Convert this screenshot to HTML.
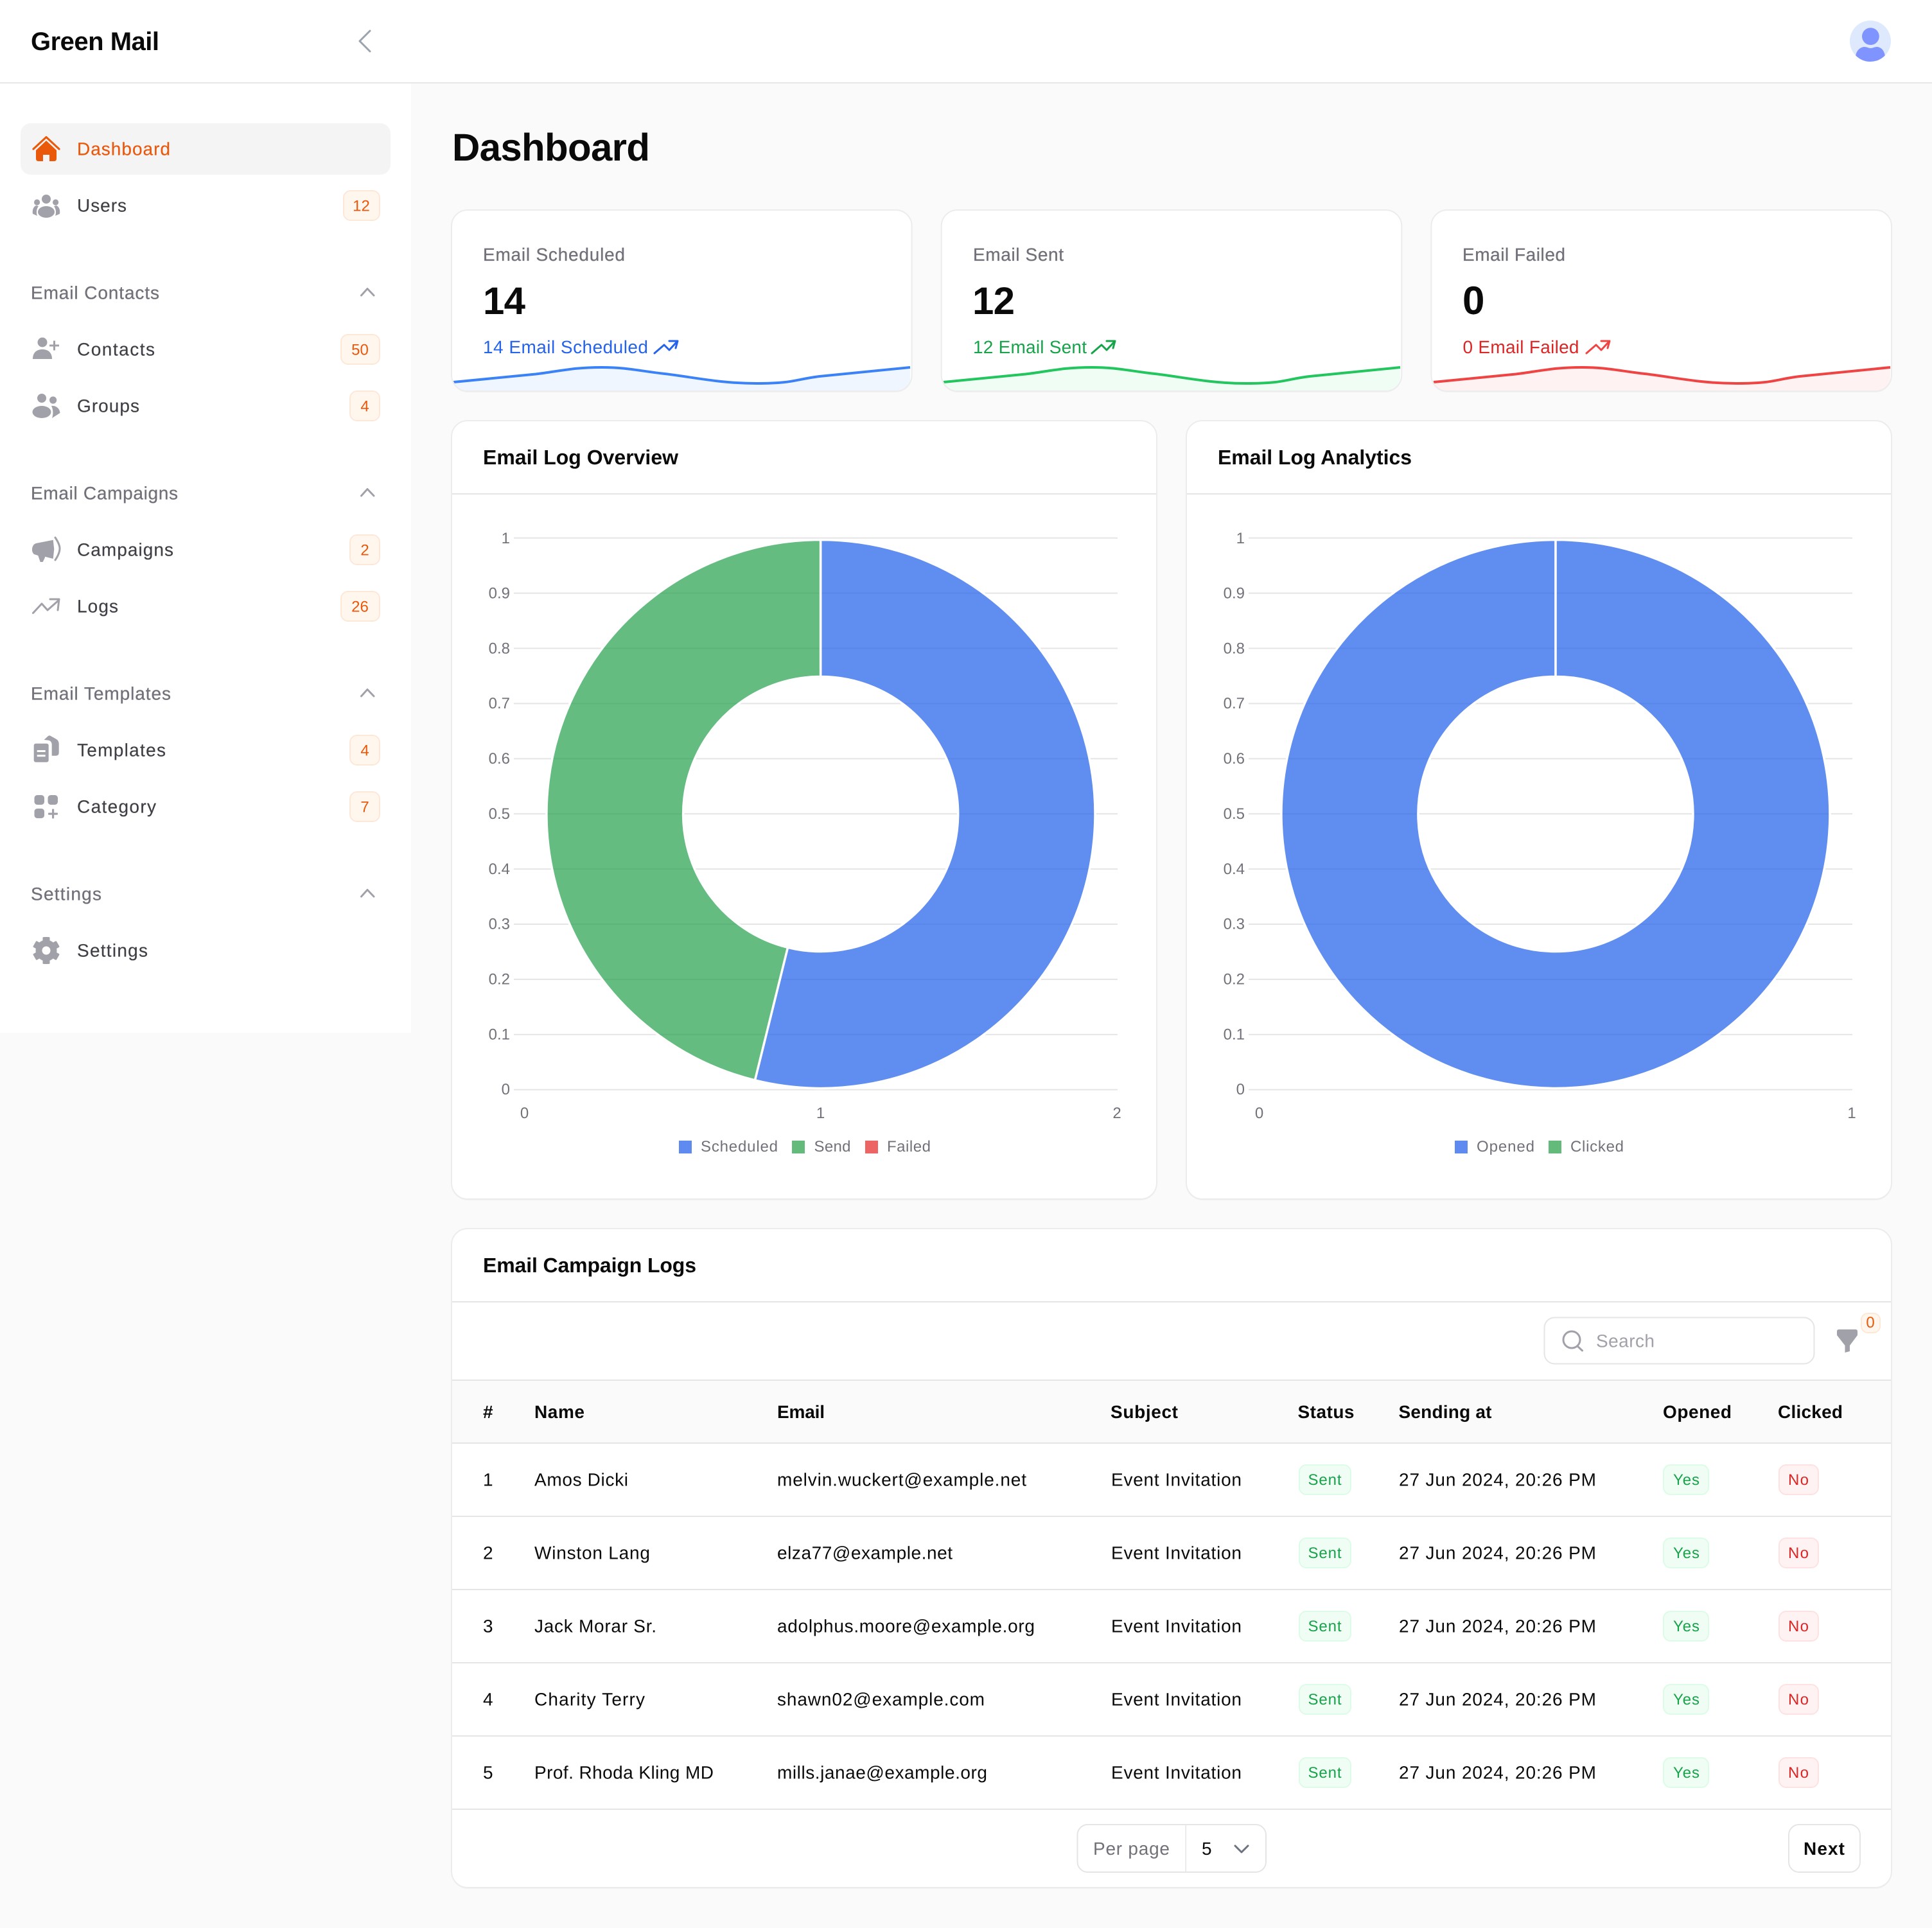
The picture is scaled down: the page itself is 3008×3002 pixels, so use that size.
<!DOCTYPE html>
<html lang="en"><head><meta charset="utf-8"><title>Green Mail Dashboard</title>
<style>
html,body{margin:0;padding:0;background:#fafafa}
svg{display:block}
text{font-family:"Liberation Sans",Arial,sans-serif;font-size:28px;fill:#0a0a0a;text-rendering:geometricPrecision}
.b{font-weight:700}
.g{fill:#71717a}
.nav{fill:#3f3f46;stroke:#3f3f46;stroke-width:.2px}
.h{fill:#71717a;stroke:#71717a;stroke-width:.3px}
.ax{font-size:24px;fill:#71717a}
.bt{font-size:24px;fill:#ea580c;text-anchor:middle}
.bd{fill:#fff7ed;stroke:#fde8d8;stroke-width:2}
.card{fill:#fff;stroke:#ececec;stroke-width:2}
.sh{fill:#000;opacity:.035}
.ln{fill:#e5e5e5}
.i{fill:#a1a1aa}
.s{fill:none;stroke:#a1a1aa;stroke-width:3;stroke-linecap:round;stroke-linejoin:round}
.ok{fill:#f0fdf4;stroke:#dcfce7;stroke-width:2}
.no{fill:#fef2f2;stroke:#fee2e2;stroke-width:2}
.okt{font-size:24px;fill:#16a34a}
.not{font-size:24px;fill:#dc2626}
.sl{fill:rgba(37,99,235,.73);stroke:#fff;stroke-width:3.5}
.sg{fill:rgba(34,160,74,.7);stroke:#fff;stroke-width:3.5}
</style></head><body>
<svg xmlns="http://www.w3.org/2000/svg" width="3008" height="3002" viewBox="0 0 3008 3002">
<defs>
<path id="sp" d="M0 595L128 582.5C165 578 185 572 231 572C270 572 285 577 329 582C375 587.5 415 597 472 597C530 597 530 591 570 586L711 572"/>
<path id="sa" d="M0 595L128 582.5C165 578 185 572 231 572C270 572 285 577 329 582C375 587.5 415 597 472 597C530 597 530 591 570 586L711 572V612H0Z"/>
<clipPath id="c1"><rect x="704" y="328" width="714.67" height="280" rx="24"/></clipPath>
<clipPath id="c2"><rect x="1466.67" y="328" width="714.67" height="280" rx="24"/></clipPath>
<clipPath id="c3"><rect x="2229.33" y="328" width="714.67" height="280" rx="24"/></clipPath>
<clipPath id="av"><circle cx="2912" cy="64" r="32"/></clipPath>
<g id="tr" fill="none" stroke-width="3" stroke-linecap="round" stroke-linejoin="round"><path d="M0 20L15 7L23 15L35 2"/><path d="M23 1H36L33 12"/></g>
</defs>
<rect width="3008" height="3002" fill="#fafafa"/>
<!-- header and sidebar -->
<rect x="0" y="0" width="3008" height="128" fill="#fff"/>
<rect x="0" y="128" width="3008" height="2" fill="#e7e7e7"/>
<rect x="0" y="130" width="640" height="1478" fill="#fff"/>
<text x="48" y="78" class="b" style="font-size:40px" textLength="200">Green Mail</text>
<path d="M576 48L560 64L576 80" fill="none" stroke="#9ca3af" stroke-width="3" stroke-linecap="round" stroke-linejoin="round"/>
<circle cx="2912" cy="64" r="32" fill="#dfe9fd"/>
<g clip-path="url(#av)"><circle cx="2912.4" cy="56.6" r="13.4" fill="#8094ff"/>
<path d="M2889 88C2890 78 2897 73 2903 73C2907 73 2909 75 2912.4 75C2916 75 2918 73 2922 73C2928 73 2934 78 2935 88C2929 93 2921 97 2912 97C2903 97 2895 93 2889 88Z" fill="#8094ff"/></g>
<!-- nav -->
<rect x="32" y="192" width="576" height="80" rx="16" fill="#f4f4f5"/>
<path d="M52 232L72 213.5L92 232" fill="none" stroke="#ea580c" stroke-width="3.2" stroke-linejoin="round" stroke-linecap="round"/>
<path d="M72 219L88 234V247Q88 251 84 251H77V241H67V251H60Q56 251 56 247V234Z" fill="#ea580c"/>
<text x="120" y="241.5" style="fill:#ea580c;stroke:#ea580c;stroke-width:.2px" textLength="145">Dashboard</text>
<g class="i"><circle cx="72" cy="310" r="7"/><circle cx="57.6" cy="315" r="4.6"/><circle cx="86.6" cy="315" r="4.6"/><ellipse cx="72" cy="330" rx="13" ry="9"/><path d="M56 320C52 322 50 327 51 333L58 336C56 331 57 325 60 321ZM88 320C92 322 94 327 93 333L86 336C88 331 87 325 84 321Z"/></g>
<text x="120" y="329.5" class="nav" textLength="77">Users</text>
<rect x="535" y="297" width="56" height="46" rx="11" class="bd"/><text x="562.5" y="328.5" class="bt">12</text>
<text x="48" y="465.5" class="h" textLength="200">Email Contacts</text>
<path class="s" d="M562.5 460L572 449.5L582 460"/>
<g class="i"><circle cx="66" cy="533" r="7.5"/><path d="M51 559C51 549 57 544 66 544C75 544 81 549 81 559Z"/><rect x="77" y="536.5" width="15" height="3"/><rect x="83" y="530.5" width="3" height="15"/></g>
<text x="120" y="553.5" class="nav" textLength="121">Contacts</text>
<rect x="531" y="521" width="60" height="46" rx="11" class="bd"/><text x="560.5" y="552.5" class="bt">50</text>
<g class="i"><circle cx="65" cy="620" r="7"/><circle cx="82.6" cy="623" r="5.6"/><ellipse cx="65" cy="641.5" rx="14.5" ry="9.5"/><path d="M80 632C87 631 93 636 93.5 643L81 651C83 645 83 638 80 632Z"/></g>
<text x="120" y="641.5" class="nav" textLength="97">Groups</text>
<rect x="545" y="609" width="46" height="46" rx="11" class="bd"/><text x="568" y="640.5" class="bt">4</text>
<text x="48" y="777.5" class="h" textLength="229">Email Campaigns</text>
<path class="s" d="M562.5 772L572 761.5L582 772"/>
<path class="i" d="M50 856C50 850 53 847 56 846L82.7 840.7L84.3 855L82.7 870L70 866.7V868L66.7 875H62.7L59.3 865L53 863C51 861 50 859 50 856Z"/>
<path d="M86 837C90 843 93 849 93 854C93 860 90 866 86 872" fill="none" stroke="#a1a1aa" stroke-width="3" stroke-linecap="round"/>
<text x="120" y="865.5" class="nav" textLength="150">Campaigns</text>
<rect x="545" y="833" width="46" height="46" rx="11" class="bd"/><text x="568" y="864.5" class="bt">2</text>
<path class="s" d="M51.5 954.5L65 940L74 950L91.5 934.5M78 933H92L90 950"/>
<text x="120" y="953.5" class="nav" textLength="64">Logs</text>
<rect x="531" y="921" width="60" height="46" rx="11" class="bd"/><text x="560.5" y="952.5" class="bt">26</text>
<text x="48" y="1089.5" class="h" textLength="218">Email Templates</text>
<path class="s" d="M562.5 1084L572 1073.5L582 1084"/>
<g class="i"><path d="M68.5 1152L75 1146Q77 1144.5 79 1146L87 1150.5Q91.7 1153 91.7 1158V1172Q91.7 1176.7 87 1176.7H80.7V1160Q80.7 1153 74 1152.5Z"/><rect x="52.7" y="1157.7" width="23" height="29" rx="3"/></g>
<rect x="57.7" y="1168" width="13" height="3" fill="#fff"/><rect x="57.7" y="1175.2" width="13" height="3" fill="#fff"/>
<text x="120" y="1177.5" class="nav" textLength="138">Templates</text>
<rect x="545" y="1145" width="46" height="46" rx="11" class="bd"/><text x="568" y="1176.5" class="bt">4</text>
<g class="i"><rect x="53.5" y="1238" width="15.5" height="15" rx="4.5"/><rect x="74.5" y="1238" width="15.5" height="15" rx="4.5"/><rect x="53.5" y="1259" width="15.5" height="15" rx="4.5"/><rect x="75" y="1265.5" width="15" height="3.2" rx="1"/><rect x="81" y="1259.5" width="3.2" height="15" rx="1"/></g>
<text x="120" y="1265.5" class="nav" textLength="123">Category</text>
<rect x="545" y="1233" width="46" height="46" rx="11" class="bd"/><text x="568" y="1264.5" class="bt">7</text>
<text x="48" y="1401.5" class="h" textLength="110">Settings</text>
<path class="s" d="M562.5 1396L572 1385.5L582 1396"/>
<g class="i"><circle cx="72" cy="1480" r="16.5"/>
<g transform="translate(72 1480)"><rect x="-5.5" y="-21" width="11" height="8" rx="1.5"/><rect x="-5.5" y="-21" width="11" height="8" rx="1.5" transform="rotate(60)"/><rect x="-5.5" y="-21" width="11" height="8" rx="1.5" transform="rotate(120)"/><rect x="-5.5" y="-21" width="11" height="8" rx="1.5" transform="rotate(180)"/><rect x="-5.5" y="-21" width="11" height="8" rx="1.5" transform="rotate(240)"/><rect x="-5.5" y="-21" width="11" height="8" rx="1.5" transform="rotate(300)"/></g></g>
<circle cx="72" cy="1480" r="6.5" fill="#fff"/>
<text x="120" y="1489.5" class="nav" textLength="110">Settings</text>
<!-- title -->
<text x="704" y="250" class="b" style="font-size:60px" textLength="308">Dashboard</text>
<!-- stat cards -->
<rect x="703" y="329" width="716.67" height="282" rx="25" class="sh"/><rect x="1465.67" y="329" width="716.67" height="282" rx="25" class="sh"/><rect x="2228.33" y="329" width="716.67" height="282" rx="25" class="sh"/>
<rect x="703" y="327" width="716.67" height="282" rx="25" class="card"/>
<rect x="1465.67" y="327" width="716.67" height="282" rx="25" class="card"/>
<rect x="2228.33" y="327" width="716.67" height="282" rx="25" class="card"/>
<g clip-path="url(#c1)"><use href="#sa" x="706" fill="#eff6ff"/><use href="#sp" x="706" fill="none" stroke="#3b82f6" stroke-width="4"/></g>
<g clip-path="url(#c2)"><use href="#sa" x="1469" fill="#f0fdf4"/><use href="#sp" x="1469" fill="none" stroke="#22c55e" stroke-width="4"/></g>
<g clip-path="url(#c3)"><use href="#sa" x="2232" fill="#fef2f2"/><use href="#sp" x="2232" fill="none" stroke="#ef4444" stroke-width="4"/></g>
<text x="752" y="406" class="h" textLength="221">Email Scheduled</text>
<text x="752" y="489" class="b" style="font-size:60px" textLength="66">14</text>
<text x="752" y="550" style="fill:#2563eb" textLength="257">14 Email Scheduled</text>
<use href="#tr" x="1019" y="530" stroke="#2563eb"/>
<text x="1515" y="406" class="h" textLength="141">Email Sent</text>
<text x="1514" y="489" class="b" style="font-size:60px" textLength="66">12</text>
<text x="1515" y="550" style="fill:#16a34a" textLength="177">12 Email Sent</text>
<use href="#tr" x="1700" y="530" stroke="#16a34a"/>
<text x="2277" y="406" class="h" textLength="160">Email Failed</text>
<text x="2277" y="489" class="b" style="font-size:62px">0</text>
<text x="2277.5" y="550" style="fill:#dc2626" textLength="181">0 Email Failed</text>
<use href="#tr" x="2470" y="530" stroke="#ef4444"/>
<!-- chart cards -->
<rect x="703" y="657" width="1098" height="1212" rx="25" class="sh"/><rect x="1847" y="657" width="1098" height="1212" rx="25" class="sh"/>
<rect x="703" y="655" width="1098" height="1212" rx="25" class="card"/>
<rect x="1847" y="655" width="1098" height="1212" rx="25" class="card"/>
<rect x="704" y="768" width="1096" height="2" class="ln"/><rect x="1848" y="768" width="1096" height="2" class="ln"/>
<text x="752" y="723" class="b" style="font-size:32px" textLength="304">Email Log Overview</text>
<text x="1896" y="723" class="b" style="font-size:32px" textLength="302">Email Log Analytics</text>
<g class="ln">
<rect x="800" y="836.7" width="940" height="2"/><rect x="800" y="922.6" width="940" height="2"/><rect x="800" y="1008.5" width="940" height="2"/><rect x="800" y="1094.4" width="940" height="2"/><rect x="800" y="1180.3" width="940" height="2"/><rect x="800" y="1266.2" width="940" height="2"/><rect x="800" y="1352.1" width="940" height="2"/><rect x="800" y="1438" width="940" height="2"/><rect x="800" y="1523.9" width="940" height="2"/><rect x="800" y="1609.8" width="940" height="2"/><rect x="800" y="1695.7" width="940" height="2"/>
<rect x="1944" y="836.7" width="940" height="2"/><rect x="1944" y="922.6" width="940" height="2"/><rect x="1944" y="1008.5" width="940" height="2"/><rect x="1944" y="1094.4" width="940" height="2"/><rect x="1944" y="1180.3" width="940" height="2"/><rect x="1944" y="1266.2" width="940" height="2"/><rect x="1944" y="1352.1" width="940" height="2"/><rect x="1944" y="1438" width="940" height="2"/><rect x="1944" y="1523.9" width="940" height="2"/><rect x="1944" y="1609.8" width="940" height="2"/><rect x="1944" y="1695.7" width="940" height="2"/>
</g>
<g class="ax" text-anchor="end">
<text class="ax" x="794" y="846">1</text><text class="ax" x="794" y="931.5">0.9</text><text class="ax" x="794" y="1017.5">0.8</text><text class="ax" x="794" y="1103">0.7</text><text class="ax" x="794" y="1189">0.6</text><text class="ax" x="794" y="1275">0.5</text><text class="ax" x="794" y="1361">0.4</text><text class="ax" x="794" y="1446.5">0.3</text><text class="ax" x="794" y="1532.5">0.2</text><text class="ax" x="794" y="1618.5">0.1</text><text class="ax" x="794" y="1704">0</text>
<text class="ax" x="1938" y="846">1</text><text class="ax" x="1938" y="931.5">0.9</text><text class="ax" x="1938" y="1017.5">0.8</text><text class="ax" x="1938" y="1103">0.7</text><text class="ax" x="1938" y="1189">0.6</text><text class="ax" x="1938" y="1275">0.5</text><text class="ax" x="1938" y="1361">0.4</text><text class="ax" x="1938" y="1446.5">0.3</text><text class="ax" x="1938" y="1532.5">0.2</text><text class="ax" x="1938" y="1618.5">0.1</text><text class="ax" x="1938" y="1704">0</text>
</g>
<g text-anchor="middle">
<text class="ax" x="816.5" y="1741">0</text><text class="ax" x="1277.5" y="1741">1</text><text class="ax" x="1739" y="1741">2</text>
<text class="ax" x="1960.5" y="1741">0</text><text class="ax" x="2883" y="1741">1</text>
</g>
<path class="sl" d="M1277.6 840.5A427 427 0 1 1 1175.4 1682L1226.5 1475.3A214 214 0 1 0 1277.6 1053.5Z"/>
<path class="sg" d="M1175.4 1682A427 427 0 0 1 1277.6 840.5L1277.6 1053.5A214 214 0 0 0 1226.5 1475.3Z"/>
<path class="sl" d="M2422 840.5A427 427 0 1 1 2421.9 840.5L2421.9 1053.5A214 214 0 1 0 2422 1053.5Z"/>
<rect x="1057" y="1776" width="20" height="20" fill="#5f8af0"/><text class="ax" x="1091" y="1793" textLength="120">Scheduled</text>
<rect x="1233" y="1776" width="20" height="20" fill="#64ba7a"/><text class="ax" x="1267.5" y="1793" textLength="57">Send</text>
<rect x="1347" y="1776" width="20" height="20" fill="#ec6464"/><text class="ax" x="1381" y="1793" textLength="68">Failed</text>
<rect x="2265" y="1776" width="20" height="20" fill="#5f8af0"/><text class="ax" x="2299" y="1793" textLength="90">Opened</text>
<rect x="2411" y="1776" width="20" height="20" fill="#64ba7a"/><text class="ax" x="2445" y="1793" textLength="83">Clicked</text>
<!-- table card -->
<rect x="703" y="1915" width="2242" height="1026" rx="25" class="sh"/>
<rect x="703" y="1913" width="2242" height="1026" rx="25" class="card"/>
<text x="752" y="1981" class="b" style="font-size:32px" textLength="332">Email Campaign Logs</text>
<rect x="704" y="2026" width="2240" height="2" class="ln"/>
<rect x="704" y="2150" width="2240" height="96" fill="#fafafa"/>
<rect x="704" y="2148" width="2240" height="2" class="ln"/>
<rect x="704" y="2246" width="2240" height="2" class="ln"/>
<rect x="704" y="2360" width="2240" height="2" class="ln"/>
<rect x="704" y="2474" width="2240" height="2" class="ln"/>
<rect x="704" y="2588" width="2240" height="2" class="ln"/>
<rect x="704" y="2702" width="2240" height="2" class="ln"/>
<rect x="704" y="2816" width="2240" height="2" class="ln"/>
<rect x="2404.5" y="2052" width="420" height="72" rx="16" class="sh"/>
<rect x="2404.5" y="2051.5" width="420" height="72" rx="16" fill="#fff" stroke="#e5e5e5" stroke-width="2"/>
<circle cx="2447" cy="2086" r="13" fill="none" stroke="#a1a1aa" stroke-width="3"/><path d="M2456 2096L2463.5 2103" stroke="#a1a1aa" stroke-width="3" stroke-linecap="round"/>
<text x="2485" y="2097.5" style="fill:#a1a1aa" textLength="91">Search</text>
<path class="i" d="M2860 2073Q2860 2070 2863 2070H2889Q2892 2070 2892 2073V2079L2880 2095V2104L2872.5 2106V2095L2860 2079Z"/>
<rect x="2898" y="2045" width="29" height="30" rx="10" class="bd"/><text x="2912" y="2067" class="bt">0</text>
<g class="b">
<text class="b" x="752" y="2208" textLength="18">#</text>
<text class="b" x="832" y="2208" textLength="78">Name</text>
<text class="b" x="1210" y="2208" textLength="74">Email</text>
<text class="b" x="1729" y="2208" textLength="105">Subject</text>
<text class="b" x="2020.5" y="2208" textLength="88">Status</text>
<text class="b" x="2177.5" y="2208" textLength="145">Sending at</text>
<text class="b" x="2589" y="2208" textLength="107">Opened</text>
<text class="b" x="2768" y="2208" textLength="101">Clicked</text>
</g>
<!-- rows -->
<text x="752" y="2313.5">1</text><text x="832" y="2313.5" textLength="146">Amos Dicki</text><text x="1210" y="2313.5" textLength="388">melvin.wuckert@example.net</text><text x="1730" y="2313.5" textLength="203">Event Invitation</text><text x="2178" y="2313.5" textLength="307">27 Jun 2024, 20:26 PM</text>
<text x="752" y="2427.5">2</text><text x="832" y="2427.5" textLength="180">Winston Lang</text><text x="1210" y="2427.5" textLength="273">elza77@example.net</text><text x="1730" y="2427.5" textLength="203">Event Invitation</text><text x="2178" y="2427.5" textLength="307">27 Jun 2024, 20:26 PM</text>
<text x="752" y="2541.5">3</text><text x="832" y="2541.5" textLength="190">Jack Morar Sr.</text><text x="1210" y="2541.5" textLength="401">adolphus.moore@example.org</text><text x="1730" y="2541.5" textLength="203">Event Invitation</text><text x="2178" y="2541.5" textLength="307">27 Jun 2024, 20:26 PM</text>
<text x="752" y="2655.5">4</text><text x="832" y="2655.5" textLength="172">Charity Terry</text><text x="1210" y="2655.5" textLength="323">shawn02@example.com</text><text x="1730" y="2655.5" textLength="203">Event Invitation</text><text x="2178" y="2655.5" textLength="307">27 Jun 2024, 20:26 PM</text>
<text x="752" y="2769.5">5</text><text x="832" y="2769.5" textLength="279">Prof. Rhoda Kling MD</text><text x="1210" y="2769.5" textLength="327">mills.janae@example.org</text><text x="1730" y="2769.5" textLength="203">Event Invitation</text><text x="2178" y="2769.5" textLength="307">27 Jun 2024, 20:26 PM</text>
<!-- row badges -->
<rect x="2023" y="2281" width="80" height="46" rx="11" class="ok"/><text x="2036.5" y="2312" class="okt" textLength="52">Sent</text><rect x="2590" y="2281" width="70" height="46" rx="11" class="ok"/><text x="2605" y="2312" class="okt" textLength="41">Yes</text><rect x="2770" y="2281" width="61" height="46" rx="11" class="no"/><text x="2784" y="2312" class="not" textLength="32">No</text>
<rect x="2023" y="2395" width="80" height="46" rx="11" class="ok"/><text x="2036.5" y="2426" class="okt" textLength="52">Sent</text><rect x="2590" y="2395" width="70" height="46" rx="11" class="ok"/><text x="2605" y="2426" class="okt" textLength="41">Yes</text><rect x="2770" y="2395" width="61" height="46" rx="11" class="no"/><text x="2784" y="2426" class="not" textLength="32">No</text>
<rect x="2023" y="2509" width="80" height="46" rx="11" class="ok"/><text x="2036.5" y="2540" class="okt" textLength="52">Sent</text><rect x="2590" y="2509" width="70" height="46" rx="11" class="ok"/><text x="2605" y="2540" class="okt" textLength="41">Yes</text><rect x="2770" y="2509" width="61" height="46" rx="11" class="no"/><text x="2784" y="2540" class="not" textLength="32">No</text>
<rect x="2023" y="2623" width="80" height="46" rx="11" class="ok"/><text x="2036.5" y="2654" class="okt" textLength="52">Sent</text><rect x="2590" y="2623" width="70" height="46" rx="11" class="ok"/><text x="2605" y="2654" class="okt" textLength="41">Yes</text><rect x="2770" y="2623" width="61" height="46" rx="11" class="no"/><text x="2784" y="2654" class="not" textLength="32">No</text>
<rect x="2023" y="2737" width="80" height="46" rx="11" class="ok"/><text x="2036.5" y="2768" class="okt" textLength="52">Sent</text><rect x="2590" y="2737" width="70" height="46" rx="11" class="ok"/><text x="2605" y="2768" class="okt" textLength="41">Yes</text><rect x="2770" y="2737" width="61" height="46" rx="11" class="no"/><text x="2784" y="2768" class="not" textLength="32">No</text>
<!-- footer -->
<rect x="1677.5" y="2842" width="293.5" height="74" rx="16" class="sh"/>
<rect x="1677.5" y="2841" width="293.5" height="74" rx="16" fill="#fff" stroke="#e5e5e5" stroke-width="2"/>
<rect x="1845.5" y="2842" width="1.5" height="72" fill="#e5e5e5"/>
<text x="1702" y="2888" class="g" textLength="119">Per page</text>
<text x="1871" y="2888" textLength="16">5</text>
<path d="M1923 2874L1933 2884L1943 2874" fill="none" stroke="#6b7280" stroke-width="3" stroke-linecap="round" stroke-linejoin="round"/>
<rect x="2785" y="2842" width="111" height="74" rx="16" class="sh"/>
<rect x="2785" y="2841" width="111" height="74" rx="16" fill="#fff" stroke="#e5e5e5" stroke-width="2"/>
<text x="2808" y="2888" class="b" textLength="64">Next</text>
</svg>
</body></html>
